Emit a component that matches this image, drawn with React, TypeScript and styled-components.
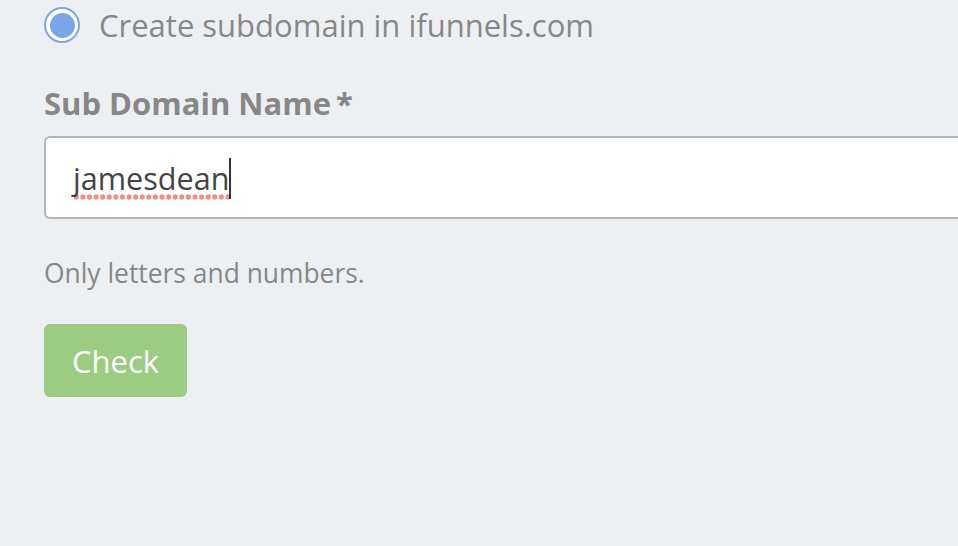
import styled, { createGlobalStyle } from "styled-components";

const GlobalStyle = createGlobalStyle`
    html, body {
        margin: 0;
        padding: 0;
        background: #edf0f3;
        overflow: hidden;
    }
    body {
        font-family: "Open Sans", "Liberation Sans", sans-serif;
    }
`;

const Page = styled.div`
    width: 958px;
    height: 546px;
    padding: 7px 0 0 44px;
    box-sizing: border-box;
    display: flex;
    flex-direction: column;
    align-items: flex-start;
    overflow: hidden;
`;

const RadioRow = styled.label`
    display: flex;
    align-items: center;
    gap: 19px;
    height: 36px;
`;

const RadioOuter = styled.span`
    width: 36px;
    height: 36px;
    box-sizing: border-box;
    border-radius: 50%;
    border: 2px solid #7ea6e8;
    background: #fff;
    display: flex;
    align-items: center;
    justify-content: center;
`;

const RadioDot = styled.span`
    width: 25px;
    height: 25px;
    border-radius: 50%;
    background: #7aa5e9;
`;

const RadioText = styled.span`
    font-size: 31px;
    line-height: 36px;
    color: #878787;
`;

const FieldLabel = styled.div`
    margin-top: 40px;
    font-size: 31px;
    font-weight: 700;
    color: #878787;
    line-height: 40px;
`;

const Star = styled.span`
    margin-left: 5px;
`;

const Field = styled.div`
    margin-top: 13px;
    align-self: stretch;
    height: 83px;
    box-sizing: border-box;
    border: 2px solid #b4b4b4;
    border-right: none;
    border-radius: 6px 0 0 6px;
    background: #fff;
    display: flex;
    align-items: flex-start;
    padding-left: 27px;
`;

const Typed = styled.span`
    margin-top: 22px;
    font-size: 30.6px;
    line-height: 36px;
    padding-bottom: 4px;
    color: #444;
    background: radial-gradient(circle, #f08e88 2.4px, transparent 2.9px) 0 100% / 6.6px 6px repeat-x;
`;

const Caret = styled.span`
    margin-top: 20px;
    width: 2px;
    height: 41px;
    background: #333;
`;

const Help = styled.div`
    margin-top: 37px;
    font-size: 26.4px;
    color: #878787;
    line-height: 34px;
`;

const CheckButton = styled.button`
    margin-top: 34px;
    width: 143px;
    height: 73px;
    border: none;
    border-radius: 6px;
    background: #9ccb82;
    color: #fff;
    font-family: "Open Sans", "Liberation Sans", sans-serif;
    font-size: 31px;
    padding: 0;
`;

function App() {
    return (
        <>
            <GlobalStyle />
            <Page>
                <RadioRow>
                    <RadioOuter>
                        <RadioDot />
                    </RadioOuter>
                    <RadioText>Create subdomain in ifunnels.com</RadioText>
                </RadioRow>
                <FieldLabel>
                    Sub Domain Name<Star>*</Star>
                </FieldLabel>
                <Field role="textbox">
                    <Typed>jamesdean</Typed>
                    <Caret />
                </Field>
                <Help>Only letters and numbers.</Help>
                <CheckButton>Check</CheckButton>
            </Page>
        </>
    );
}

export default App;
